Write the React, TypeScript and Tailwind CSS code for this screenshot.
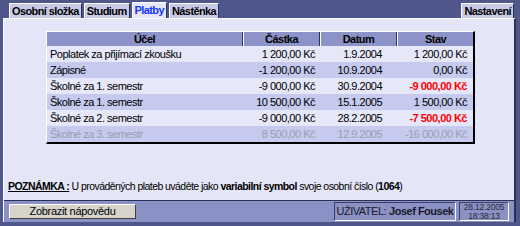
import React from "react"

type Row = {
    ucel: string
    castka: string
    datum: string
    stav: string
    /** red, bold balance */
    debt?: boolean
    /** future payment, greyed */
    planned?: boolean
}

const rows: Row[] = [
    { ucel: "Poplatek za přijímací zkoušku", castka: "1 200,00 Kč", datum: "1.9.2004", stav: "1 200,00 Kč" },
    { ucel: "Zápisné", castka: "-1 200,00 Kč", datum: "10.9.2004", stav: "0,00 Kč" },
    { ucel: "Školné za 1. semestr", castka: "-9 000,00 Kč", datum: "30.9.2004", stav: "-9 000,00 Kč", debt: true },
    { ucel: "Školné za 1. semestr", castka: "10 500,00 Kč", datum: "15.1.2005", stav: "1 500,00 Kč" },
    { ucel: "Školné za 2. semestr", castka: "-9 000,00 Kč", datum: "28.2.2005", stav: "-7 500,00 Kč", debt: true },
    { ucel: "Školné za 3. semestr", castka: "8 500,00 Kč", datum: "12.9.2005", stav: "-16 000,00 Kč", planned: true },
]

const tabs = [
    { label: "Osobní složka", active: false },
    { label: "Studium", active: false },
    { label: "Platby", active: true },
    { label: "Nástěnka", active: false },
]

function Tab({ label, active }: { label: string; active?: boolean }) {
    return (
        <div
            className={`px-[2px] flex items-center border-t border-l border-r font-bold text-[11px] tracking-[-0.6px] leading-none ${
                active
                    ? "h-[16px] bg-[#e4e5f6] border-t-white border-l-white border-r-[#2a2f55] text-[#1238ff]"
                    : "h-[15px] bg-[#c7cae6] border-t-white border-l-white border-r-[#2a2f55] text-black"
            }`}
        >
            {label}
        </div>
    )
}

function PaymentsTable() {
    return (
        <div className="w-[429px] border-t border-l border-t-white border-l-white border-r-2 border-b-2 border-r-black border-b-black">
            <div className="grid grid-cols-[196px_77px_77px_1fr] h-[14px] bg-[#8c93c8] font-bold text-black">
                <div className="flex items-center justify-center border-r border-r-[#2d3160]">Účel</div>
                <div className="flex items-center justify-center border-l border-l-white border-r border-r-[#2d3160]">Částka</div>
                <div className="flex items-center justify-center border-l border-l-white border-r border-r-[#2d3160]">Datum</div>
                <div className="flex items-center justify-center border-l border-l-white">Stav</div>
            </div>
            {rows.map((r, i) => (
                <div
                    key={i}
                    className={`grid grid-cols-[196px_77px_77px_1fr] h-[16px] items-center ${
                        i % 2 === 0 ? "bg-[#e6e7f8]" : "bg-[#c5caee]"
                    } ${r.planned ? "text-[#9c9db4]" : "text-black"}`}
                >
                    <div className="pl-[3px] whitespace-nowrap">{r.ucel}</div>
                    <div className="text-right pr-[5px] whitespace-nowrap">{r.castka}</div>
                    <div className="text-right pr-[15px] whitespace-nowrap">{r.datum}</div>
                    <div
                        className={`text-right pr-[6px] whitespace-nowrap ${
                            r.debt ? "text-[#ff0000] font-bold" : ""
                        }`}
                    >
                        {r.stav}
                    </div>
                </div>
            ))}
        </div>
    )
}

export default function App() {
    return (
        <div className="w-[520px] h-[226px] bg-[#4f578a] flex flex-col font-['Liberation_Sans',Arial,sans-serif] text-[11px] tracking-[-0.5px] leading-none overflow-hidden">
            {/* Tab strip */}
            <div className="h-[18px] flex items-end justify-between pl-[9px] pr-[6px]">
                <div className="flex items-end gap-[2px]">
                    {tabs.map((t) => (
                        <Tab key={t.label} label={t.label} active={t.active} />
                    ))}
                </div>
                <Tab label="Nastavení" />
            </div>

            {/* Main panel */}
            <div className="ml-[3px] mr-[4px] h-[204px] flex flex-col bg-[#e4e5f6] border-t border-l border-t-white border-l-white border-r-2 border-r-[#2a2f55]">
                <div className="flex-1 flex flex-col">
                    <div className="pt-[12px] pl-[42px]">
                        <PaymentsTable />
                    </div>
                    <div className="mt-auto pl-[4px] pb-[9px] whitespace-nowrap text-black text-[10.5px] tracking-[-0.55px]">
                        <span className="font-bold underline">POZNÁMKA :</span> U prováděných plateb uváděte jako{" "}
                        <span className="font-bold">variabilní symbol</span> svoje osobní číslo (<span className="font-bold">1064</span>)
                    </div>
                </div>

                {/* Bottom bar */}
                <div className="h-[22px] bg-[#8a91c4] border-t border-t-[#2a2f55] flex items-center px-[5px] gap-[3px]">
                    <button className="w-[127px] h-[15px] bg-[#d6d3cb] border border-t-white border-l-white border-r-[#404040] border-b-[#404040] text-black text-[11px] tracking-[-0.3px] leading-none">
                        Zobrazit nápovědu
                    </button>
                    <div className="ml-auto h-[19px] w-[122px] flex items-center justify-center gap-[3px] whitespace-nowrap border border-t-[#3a3f6a] border-l-[#3a3f6a] border-r-white border-b-white text-[11px] text-[#1a1a2a]">
                        <span>UŽIVATEL:</span>
                        <span className="font-bold">Josef Fousek</span>
                    </div>
                    <div className="h-[19px] w-[50px] flex flex-col items-center justify-center border border-t-[#3a3f6a] border-l-[#3a3f6a] border-r-white border-b-white text-[8.5px] leading-[8.5px] tracking-[-0.2px] text-[#2a2a3a]">
                        <span>28.12.2005</span>
                        <span>18:38:13</span>
                    </div>
                </div>
            </div>
        </div>
    )
}
